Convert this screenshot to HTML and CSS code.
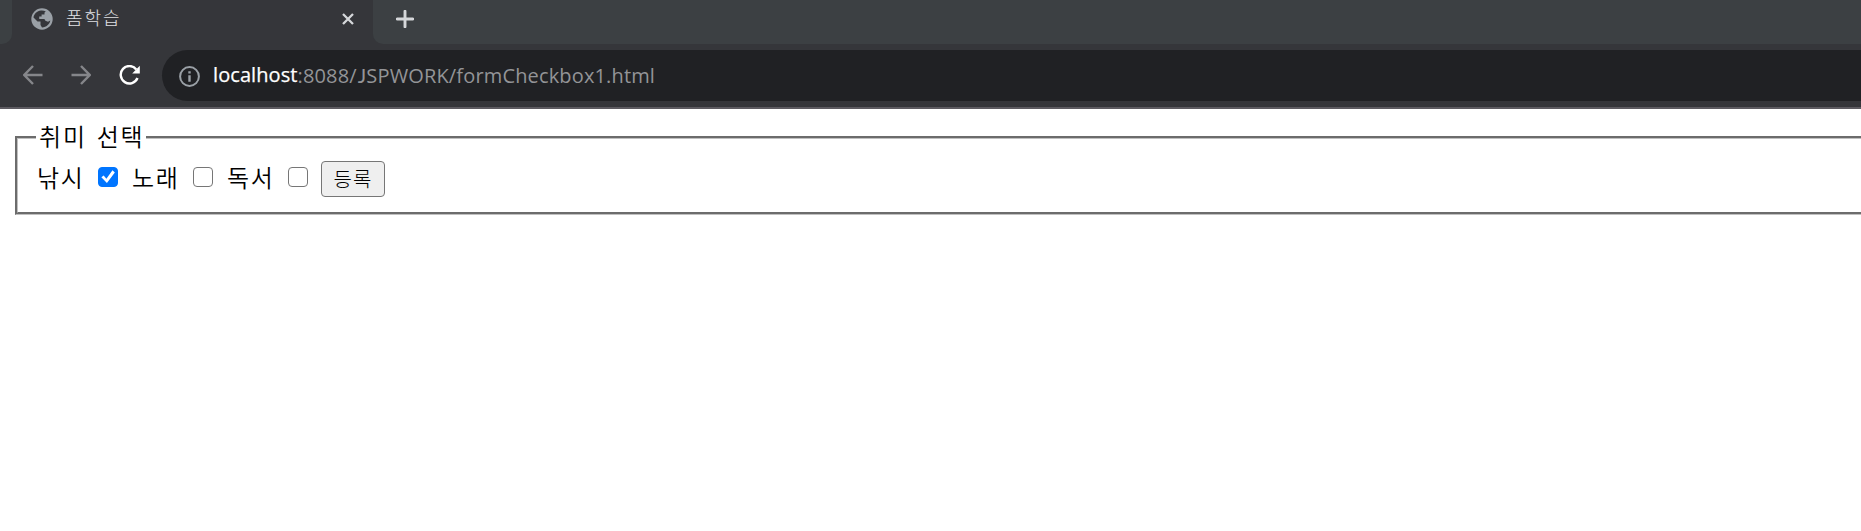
FILE: index.html
```html
<!DOCTYPE html>
<html lang="ko">
<head>
<meta charset="utf-8">
<title>폼학습</title>
<link rel="stylesheet" href="styles.css">
</head>
<body>
<header class="browser">
  <div class="tabstrip">
    <div class="strip-start"></div>
    <div class="tab">
      <svg class="globe" width="22" height="22" viewBox="0 0 22 22"><circle cx="11" cy="11" r="10.7" fill="#9aa0a6"/><path d="M10 2.6C6 3 3 6 2.5 9.5L6.5 13.5H9.5V17L11 19.4C15.5 19.4 18.5 16.3 19.3 12.5L17 13.8L14.4 12.7L13.4 10.9H8.2V8.6H10.6V6.6H13.5V4.5L14.8 3.6C13.4 2.8 11.5 2.4 10 2.6Z" fill="#35363a"/></svg>
      <span class="tab-title">폼학습</span>
      <svg class="close" width="12" height="12" viewBox="0 0 12 12"><path d="M1 1L11 11M11 1L1 11" stroke="#d5d7da" stroke-width="2.3"/></svg>
    </div>
    <div class="strip-rest">
      <svg width="18" height="18" viewBox="0 0 18 18"><path d="M9 1.2V16.8M1.2 9H16.8" stroke="#d5d7da" stroke-width="2.9" stroke-linecap="round"/></svg>
    </div>
  </div>
  <div class="toolbar">
    <svg class="nav" width="20" height="20" viewBox="0 0 20 20"><path d="M19.5 10H1.5M10 1L1.3 10L10 19" fill="none" stroke="#85868a" stroke-width="2.4"/></svg>
    <svg class="nav forward" width="20" height="20" viewBox="0 0 20 20"><path d="M.5 10H18.5M10 1L18.7 10L10 19" fill="none" stroke="#85868a" stroke-width="2.4"/></svg>
    <svg class="nav reload" width="21" height="21" viewBox="0 0 21 21"><path d="M17.3 4.4A8.7 8.7 0 1 0 18.5 13" fill="none" stroke="#fff" stroke-width="2.4"/><path d="M20.8 .8V8.4H13.2Z" fill="#fff"/></svg>
    <div class="omnibox">
      <svg class="info" width="21" height="21" viewBox="0 0 21 21"><circle cx="10.5" cy="10.5" r="9.4" fill="none" stroke="#9aa0a6" stroke-width="2"/><path d="M10.5 9.2V15.7M10.5 5.2V7.6" stroke="#9aa0a6" stroke-width="2.4"/></svg>
      <span class="url"><span class="host">localhost</span><span class="path">:8088/<span class="cap">J</span>SPWORK/formCheckbox1.html</span></span>
    </div>
  </div>
</header>
<main class="page">
  <fieldset class="hobbies">
    <legend>취미 선택</legend>
    <form class="choices">
      <span class="name">낚시</span><input class="check" type="checkbox" checked>
      <span class="name">노래</span><input class="check" type="checkbox">
      <span class="name">독서</span><input class="check" type="checkbox">
      <button class="submit" type="button">등록</button>
    </form>
  </fieldset>
</main>
</body>
</html>
```
FILE: styles.css
```css
* { box-sizing: border-box; }
body { margin: 0; background: #fff; color: #000; font-family: "Noto Sans CJK KR", sans-serif; overflow: hidden; }
svg { display: block; flex: none; }
.browser { height: 109px; background: #35363a; border-bottom: 2px solid #5d5b61; }
.tabstrip { display: flex; height: 44px; }
.strip-start { width: 12px; background: #3c4043; border-bottom-right-radius: 10px; }
.tab { width: 361px; height: 37px; display: flex; align-items: center; padding: 0 19px; }
.tab-title { margin: -3px 0 0 13px; font-size: 18px; font-weight: 300; line-height: 26px; letter-spacing: 1.9px; color: #e0e1e4; }
.close { margin-left: auto; }
.strip-rest { flex: 1; background: #3c4043; border-bottom-left-radius: 10px; padding: 10px 0 0 23px; }
.toolbar { height: 63px; padding: 6px 0 6px 23px; display: flex; align-items: flex-start; }
.nav { margin-top: 15px; }
.forward { margin-left: 28px; }
.reload { margin-left: 28px; }
.omnibox { flex: 1; height: 51px; margin-left: 22px; padding-left: 17px; display: flex; align-items: center; background: #202124; border-radius: 26px 0 0 26px; }
.info { margin-top: 1px; }
.url { margin-left: 13px; display: flex; font: 20px/28px "Open Sans", sans-serif; letter-spacing: .15px; white-space: nowrap; }
.host { color: #fff; -webkit-text-stroke: .25px #fff; letter-spacing: .08px; }
.path { color: #939497; }
.cap { font-family: Lato, sans-serif; margin-left: 1px; }
.page { padding-left: 15px; padding-top: 12px; }
.hobbies { margin: 0; width: 1870px; height: 94px; border: 3px groove #c0c0c0; padding: 8px 18px; }
.hobbies legend { width: 110px; padding: 0 0 0 3px; height: 32px; margin: 0; font-size: 24px; font-weight: 350; line-height: 30px; letter-spacing: 1.8px; word-spacing: 1.4px; white-space: nowrap; }
.choices { display: flex; align-items: center; height: 36px; }
.name { font-size: 24px; font-weight: 350; line-height: 34px; width: 61px; margin-top: -5px; padding-left: 1px; letter-spacing: 1.7px; }
.check { appearance: none; position: relative; top: -1px; left: 1px; width: 20px; height: 20px; margin: 0 14px 2px 0; border: 1px solid #767676; border-radius: 4px; background: #fff; }
.check:checked { border-color: #0075ff; background: #0075ff; }
.check:checked::before { content: ""; display: block; width: 18px; height: 18px; background: #fff; clip-path: polygon(13% 51%, 26% 41%, 41% 60%, 75% 13%, 88% 25%, 44% 84%); }
.submit { width: 64px; height: 36px; padding: 0; border: 1px solid #767676; border-radius: 4px; background: #efefef; font: 300 20px/32px "Noto Sans CJK KR", sans-serif; letter-spacing: 1.2px; }
```
